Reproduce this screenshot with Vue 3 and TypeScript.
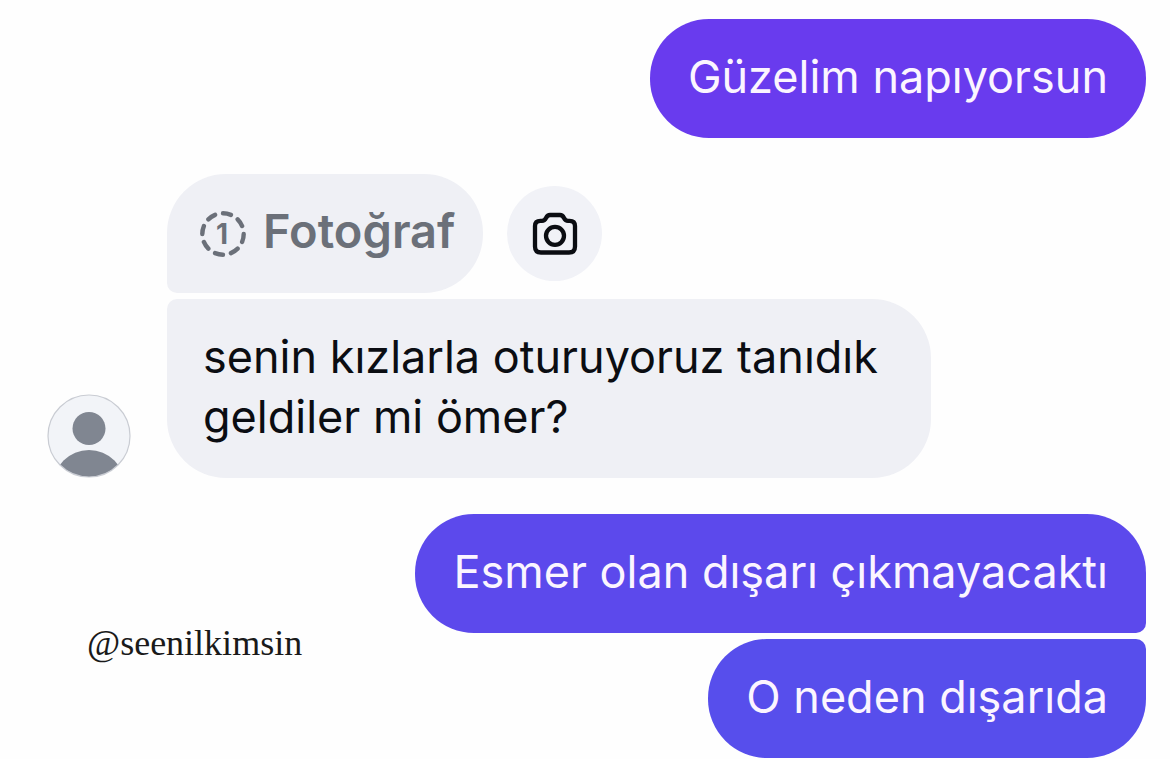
<script setup lang="ts">
interface Message {
  id: number
  text: string
  tone: string
}

const opening: Message[] = [{ id: 1, text: 'Güzelim napıyorsun', tone: 'violet' }]
const closing: Message[] = [
  { id: 2, text: 'Esmer olan dışarı çıkmayacaktı', tone: 'iris' },
  { id: 3, text: 'O neden dışarıda', tone: 'indigo' },
]
</script>

<template>
  <main class="chat">
    <section class="outgoing">
      <p v-for="m in opening" :key="m.id" class="bubble sent" :class="m.tone">{{ m.text }}</p>
    </section>

    <section class="incoming">
      <svg class="avatar" viewBox="0 0 84 84" role="img" aria-label="Profil">
        <defs>
          <clipPath id="avatar-clip"><circle cx="42" cy="42" r="41" /></clipPath>
        </defs>
        <circle cx="42" cy="42" r="41" fill="#f2f4f8" />
        <g clip-path="url(#avatar-clip)" fill="#808691">
          <circle cx="42" cy="34.5" r="16.5" />
          <circle cx="42" cy="92" r="36" />
        </g>
        <circle cx="42" cy="42" r="41" fill="none" stroke="#c9ccd3" stroke-width="1.2" />
      </svg>
      <div class="stack">
        <div class="photo-row">
          <button class="bubble received photo" type="button">
            <svg class="once" viewBox="0 0 48 48" aria-hidden="true">
              <circle
                cx="24" cy="24" r="20.7" fill="none" stroke="currentColor" stroke-width="4.4"
                stroke-linecap="round" pathLength="80" stroke-dasharray="5 5"
              />
              <text x="23" y="34" text-anchor="middle" class="digit">1</text>
            </svg>
            <span>Fotoğraf</span>
          </button>
          <button class="camera" type="button" aria-label="Kamera">
            <svg viewBox="0 0 48 48" aria-hidden="true">
              <g fill="none" stroke="currentColor" stroke-width="4.3" stroke-linejoin="round">
                <path d="M9.5 10.8 H11 C13.5 10.8 14 10 15 8 C16 6 17 5 19 5 H29 C31 5 32 6 33 8 C34 10 34.5 10.8 37 10.8 H38.500 C42 10.800 44 12.800 44 16 V36.500 C44 40.500 42 42.500 38 42.500 H10 C6 42.500 4 40.500 4 36.500 V16 C4 12.800 6 10.800 9.500 10.800 Z" />
                <circle cx="24" cy="25.800" r="9" />
              </g>
            </svg>
          </button>
        </div>
        <p class="bubble received text">senin kızlarla oturuyoruz tanıdık geldiler mi ömer?</p>
      </div>
    </section>

    <section class="closing">
      <a class="handle" href="#">@seenilkimsin</a>
      <div class="outgoing">
        <p v-for="m in closing" :key="m.id" class="bubble sent" :class="m.tone">{{ m.text }}</p>
      </div>
    </section>
  </main>
</template>

<style>
body {
  margin: 0;
  background: #fefefe;
}
</style>

<style scoped>
.chat {
  display: flex;
  flex-direction: column;
  gap: 36px;
  padding: 19px 24px 1px 47px;
  font-family: Inter, "Liberation Sans", sans-serif;
}

.outgoing {
  display: flex;
  flex-direction: column;
  align-items: flex-end;
  gap: 6px;
}

.bubble {
  box-sizing: border-box;
  margin: 0;
  padding: 28px 36px 31px;
  border: 0;
  border-radius: 59px;
  font-family: inherit;
  font-size: 45px;
  line-height: 60px;
}

.sent {
  padding-right: 38px;
  padding-left: 38px;
  color: #fbf5ff;
}

.violet {
  background: #693bee;
}

.iris {
  background: #5c49ec;
}

.indigo {
  background: #574eec;
}

.closing .sent:first-child {
  border-bottom-right-radius: 10px;
}

.closing .sent:last-child {
  border-top-right-radius: 10px;
}

.incoming {
  display: flex;
  align-items: flex-end;
  gap: 36px;
}

.avatar {
  flex: none;
  width: 84px;
  height: 84px;
}

.stack {
  flex: 1;
  display: flex;
  flex-direction: column;
  align-items: flex-start;
  gap: 6px;
}

.photo-row {
  display: flex;
  align-items: center;
  gap: 24px;
}

.received {
  background: #eff0f5;
  color: #0b0d12;
}

.photo {
  display: flex;
  align-items: center;
  gap: 16px;
  padding: 0 28px 0 32px;
  border-bottom-left-radius: 10px;
  color: #6b7079;
  font-size: 47px;
  font-weight: 600;
  cursor: pointer;
}

.photo span {
  padding: 27px 0 32px;
}

.once {
  width: 48px;
  height: 48px;
}

.digit {
  fill: currentColor;
  font-size: 28px;
  font-weight: 700;
}

.text {
  max-width: 78%;
  border-top-left-radius: 10px;
}

.camera {
  display: grid;
  place-items: center;
  width: 95px;
  height: 95px;
  padding: 0;
  border: 0;
  border-radius: 50%;
  background: #f1f2f7;
  color: #0b0d12;
  cursor: pointer;
}

.camera svg {
  width: 48px;
  height: 48px;
}

.closing {
  display: flex;
  align-items: center;
  justify-content: space-between;
}

.handle {
  padding-top: 14px;
  margin-left: 40px;
  color: #1a1a1a;
  font-family: "Liberation Serif", serif;
  font-size: 36px;
  line-height: 40px;
  text-decoration: none;
}
</style>
